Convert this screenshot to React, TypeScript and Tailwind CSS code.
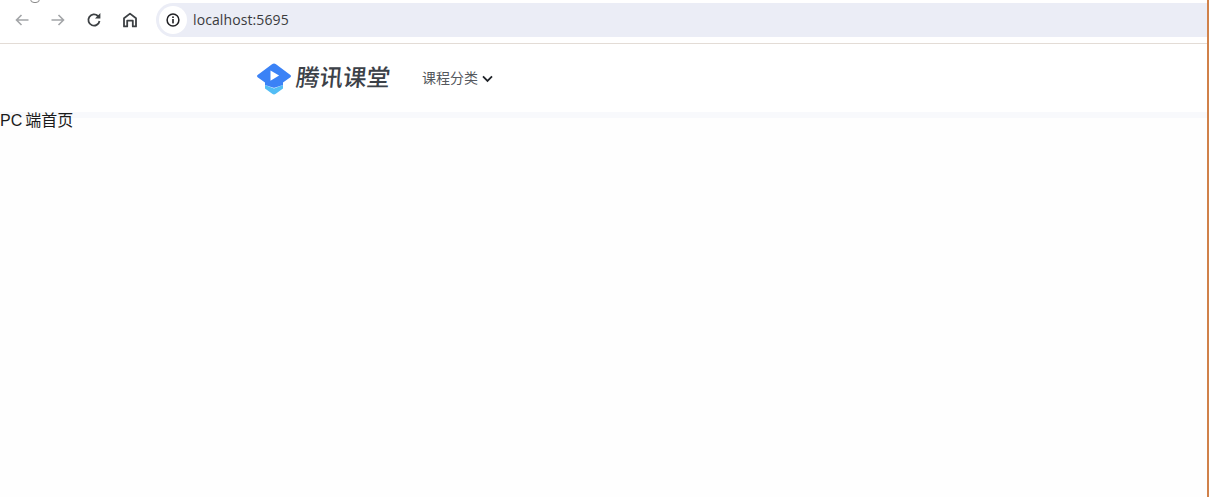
import React from "react";

const Back = () => (
  <svg width="16" height="16" viewBox="0 0 16 16" fill="none" stroke="#a3a5a8" strokeWidth="1.6">
    <path d="M14.5 8H2.5M7.5 3L2.5 8l5 5" />
  </svg>
);
const Forward = () => (
  <svg width="16" height="16" viewBox="0 0 16 16" fill="none" stroke="#a3a5a8" strokeWidth="1.6">
    <path d="M1.5 8h12M8.5 3l5 5-5 5" />
  </svg>
);
const Reload = () => (
  <svg width="16" height="16" viewBox="0 0 16 16" fill="none" stroke="#3c4043" strokeWidth="1.8">
    <path d="M13.5 9a5.6 5.6 0 1 1-1.6-5L13.6 5.6" />
    <path d="M14.4 1V6.4H9z" fill="#3c4043" stroke="none" />
  </svg>
);
const Home = () => (
  <svg width="16" height="16" viewBox="0 0 16 16" fill="none" stroke="#3c4043" strokeWidth="1.8">
    <path d="M2 14.4V6.2L8 1.6l6 4.6v8.2h-3.2V8.6H5.2v5.8z" strokeLinejoin="round" />
  </svg>
);
const Info = () => (
  <svg width="14" height="14" viewBox="0 0 14 14" fill="none">
    <circle cx="7" cy="7" r="5.9" stroke="#202124" strokeWidth="1.5" />
    <rect x="6.2" y="6" width="1.6" height="4.4" fill="#202124" />
    <rect x="6.2" y="3.4" width="1.6" height="1.6" fill="#202124" />
  </svg>
);
const Logo = () => (
  <svg width="36" height="32" viewBox="0 0 36 32">
    <path d="M9 22l9 3.6L27 22v3.4l-7.2 5.4a3 3 0 0 1-3.6 0L9 25.4z" fill="#52bdf5" />
    <path d="M16 1.2a4 4 0 0 1 4 0l14.4 10.8a1.4 1.4 0 0 1 0 2.2L27 19.6V22l-7.6 2.6a4 4 0 0 1-2.8 0L9 22v-2.4l-7.4-5.4a1.4 1.4 0 0 1 0-2.2z" fill="#3b82f6" />
    <path d="M14.5 7.4l8.6 5.2-8.6 5.2z" fill="#ffffff" />
  </svg>
);
const Chevron = () => (
  <svg width="11" height="8" viewBox="0 0 11 8" fill="none" stroke="#1f2328" strokeWidth="1.8">
    <path d="M1 1.4l4.5 4.5L10 1.4" />
  </svg>
);

export default function App() {
  return (
    <div className="relative h-[497px] w-[1209px] overflow-hidden bg-[#fefefe] border-r-2 border-[#d0814a] font-['Liberation_Sans','Noto_Sans_CJK_SC',sans-serif]">
      <div className="absolute -top-[5px] left-[30px] h-[8px] w-[10px] rounded-full border border-[#8a8a8a]" />
      <div className="flex h-[44px] items-center border-b border-[#e3dcd6] bg-white pb-[4px] pl-[14px]">
        <div className="flex w-[142px] items-center gap-[20px]">
          <Back />
          <Forward />
          <Reload />
          <Home />
        </div>
        <div className="flex h-[34px] flex-1 items-center rounded-l-full bg-[#ebedf6] pl-[3px]">
          <div className="flex h-[28px] w-[28px] items-center justify-center rounded-full bg-white">
            <Info />
          </div>
          <span className="ml-[6px] font-['Open_Sans'] text-[14px] tracking-[0.1px] text-[#3a3b3d]">localhost:5695</span>
        </div>
      </div>
      <div className="flex h-[68px] items-center bg-white pl-[256px] pt-[1px]">
        <Logo />
        <span className="ml-[4px] inline-block w-[96px] -skew-x-[6deg] whitespace-nowrap text-[23.5px] font-medium leading-none text-[#3c4148]">腾讯课堂</span>
        <span className="ml-[30px] text-[14px] text-[#55585d]">课程分类</span>
        <span className="ml-[4px] flex">
          <Chevron />
        </span>
      </div>
      <div className="h-[6px] bg-[#f8f9fc]" />
      <div className="-mt-[6px] text-[16px] leading-[17px] text-[#1b1b1b] [word-spacing:-1.5px]">PC 端首页</div>
    </div>
  );
}
